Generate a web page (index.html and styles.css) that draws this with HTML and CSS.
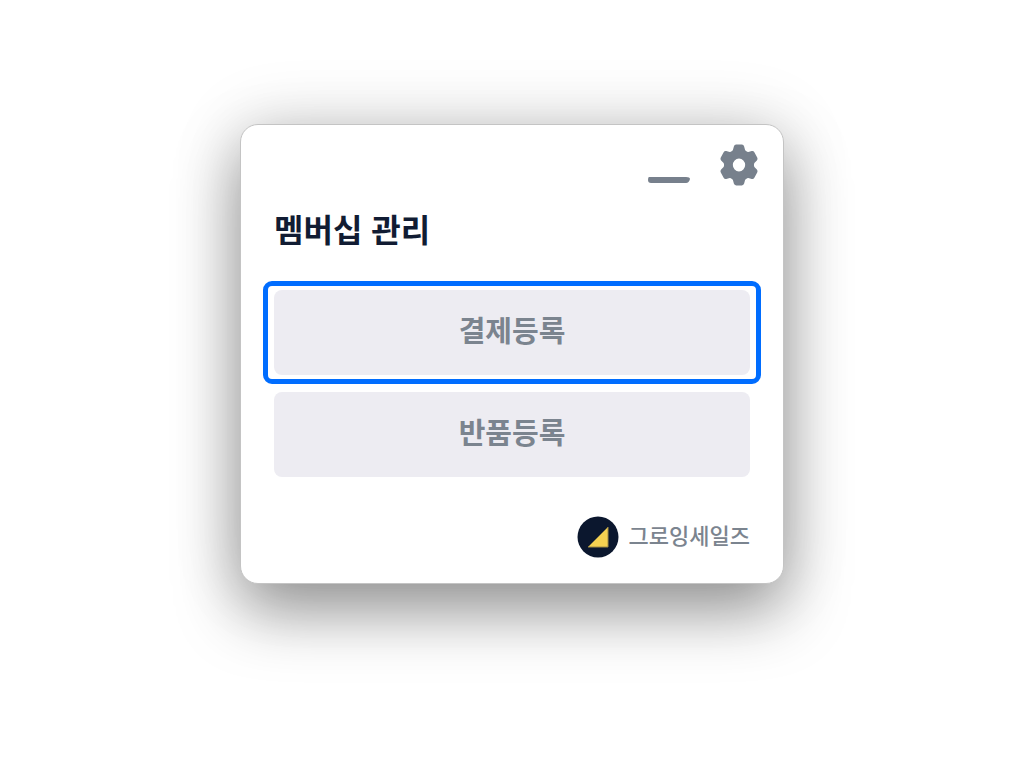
FILE: index.html
```html
<!DOCTYPE html>
<html lang="ko">
<head>
    <meta charset="UTF-8">
    <meta name="viewport" content="width=device-width, initial-scale=1.0">
    <title>멤버십 관리</title>
    <link rel="stylesheet" href="styles.css">
</head>
<body>
    <main class="window">
        <header class="window-controls">
            <button class="icon-btn" type="button" aria-label="최소화">
                <svg width="42" height="42" viewBox="0 0 42 42" fill="#77808c">
                    <path d="M1 33H38Q42 33 42 35Q41 39 38 39H3Q0 39 0 36Q0 33 1 33Z"/>
                </svg>
            </button>
            <button class="icon-btn" type="button" aria-label="설정">
                <svg width="42" height="42" viewBox="-21 -21 42 42" fill="#77808c">
                    <g transform="scale(0.95 1)">
                        <circle r="11" fill="none" stroke="#77808c" stroke-width="9"/>
                        <path id="tooth" d="M-9 -12L-6.4 -15L-5.4 -18.6Q-4.9 -20.4 -3 -20.4H3Q4.9 -20.4 5.4 -18.6L6.4 -15L9 -12Z"/>
                        <use href="#tooth" transform="rotate(60)"/>
                        <use href="#tooth" transform="rotate(120)"/>
                        <use href="#tooth" transform="rotate(180)"/>
                        <use href="#tooth" transform="rotate(240)"/>
                        <use href="#tooth" transform="rotate(300)"/>
                    </g>
                </svg>
            </button>
        </header>

        <h1 class="title">멤버십 관리</h1>

        <div class="actions">
            <button class="action-btn selected" type="button">결제등록</button>
            <button class="action-btn" type="button">반품등록</button>
        </div>

        <footer class="brand">
            <svg class="brand-logo" width="42" height="42" viewBox="0 0 42 42">
                <circle cx="21" cy="21" r="20.5" fill="#0b172e"/>
                <path d="M31 11V31H11Z" fill="#f5d151"/>
                <path d="M31 11V31H11" fill="none" stroke="#a28c45" stroke-width="1"/>
            </svg>
            <span class="brand-name">그로잉세일즈</span>
        </footer>
    </main>
</body>
</html>
```
FILE: styles.css
```css
* {
    box-sizing: border-box;
}
body {
    margin: 0;
    padding: 124px 24px;
    background-color: #fff;
    font-family: "Noto Sans CJK KR", "Noto Sans", sans-serif;
}
.window {
    max-width: 544px;
    margin: 0 auto;
    padding: 19px 33px 25px;
    background-color: #fff;
    border: 1px solid #c4c4c4;
    border-radius: 18px;
    box-shadow: 0 28px 64px rgba(0, 0, 0, 0.38), 0 0 70px rgba(0, 0, 0, 0.14);
}
.window-controls {
    display: flex;
    justify-content: flex-end;
    gap: 28px;
    margin-right: -10px;
}
.icon-btn {
    padding: 0;
    border: none;
    background: none;
    cursor: pointer;
}
.icon-btn svg {
    display: block;
}
.title {
    margin: 18px 0 38px;
    font-size: 32px;
    line-height: 48px;
    font-weight: 700;
    color: #111c33;
}
.actions {
    display: flex;
    flex-direction: column;
    gap: 17px;
}
.action-btn {
    position: relative;
    width: 100%;
    padding: 17px 0 24px;
    border: none;
    border-radius: 8px;
    background-color: #edecf2;
    font-family: inherit;
    font-size: 29px;
    line-height: 44px;
    font-weight: 700;
    color: #7b848f;
    cursor: pointer;
}
/* 선택된 버튼 테두리 */
.action-btn.selected::after {
    content: "";
    position: absolute;
    inset: -9px -11px;
    border: 5px solid #006dff;
    border-radius: 9px;
}
.brand {
    display: flex;
    align-items: center;
    justify-content: flex-end;
    gap: 10px;
    margin-top: 39px;
    font-size: 22px;
    line-height: 36px;
    font-weight: 500;
    color: #7b848f;
}
.brand-name {
    padding-bottom: 6px;
}
```
